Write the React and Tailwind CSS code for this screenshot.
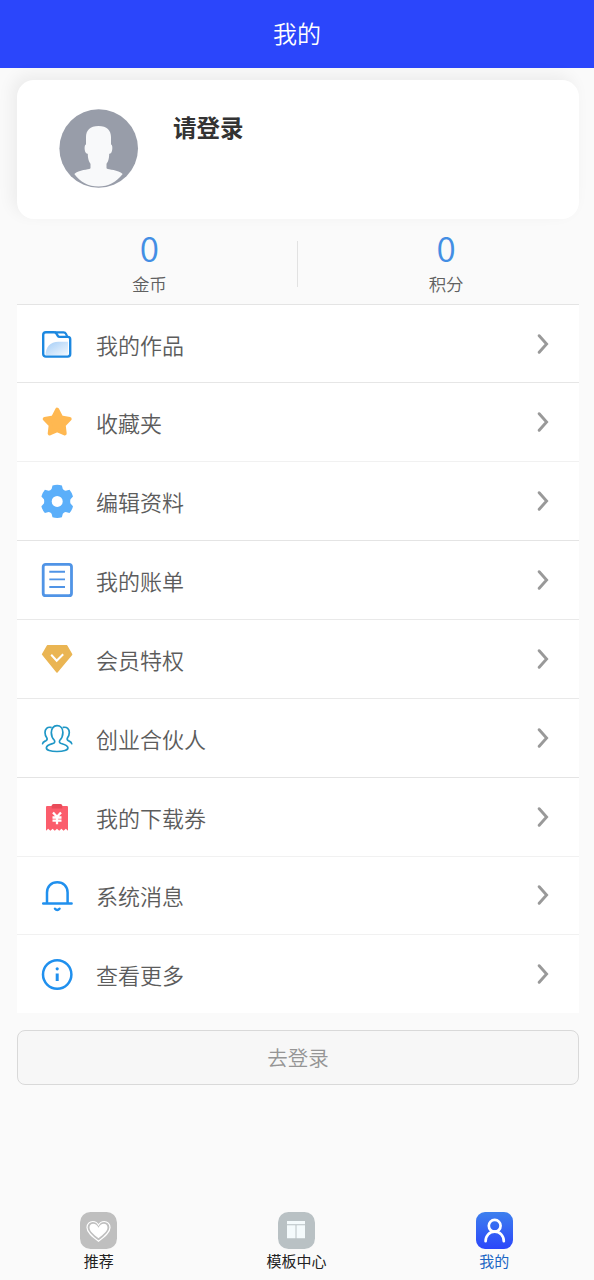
import React, { useState } from "react";

const FolderIcon = () => (
  <svg className="w-9 h-9" viewBox="0 0 36 36" fill="none">
    <defs>
      <linearGradient id="folderFill" x1="0" y1="0" x2="1" y2="1">
        <stop offset="0" stopColor="#a3cdf7" />
        <stop offset="1" stopColor="#f2f8fe" />
      </linearGradient>
    </defs>
    <path d="M6.500 29.500c0-8 4.500-13.700 13-13.700h9.500v13.700z" fill="url(#folderFill)" />
    <path d="M7 6.200h8.200c1 0 1.600.4 2.100 1.200l1.500 2.500c.4.700 1 1 1.800 1h8.300c1.400 0 2.300 1 2.300 2.300v14.800c0 1.600-1 2.600-2.600 2.600H6.900c-1.600 0-2.700-1-2.700-2.600V8.800c0-1.600 1.100-2.600 2.800-2.600z" stroke="#1c88e0" strokeWidth="2.400" />
    <path d="M16 6.300h8.500c1.300 0 2 .5 2.500 1.600l1.300 3" stroke="#1c88e0" strokeWidth="2.200" />
  </svg>
);

const StarIcon = () => (
  <svg className="w-9 h-9" viewBox="0 0 36 36">
    <path d="M18.200 5.700l4 7.800 8.500 1.400-6 6.200 1 8.400-7.500-3.300-7.500 3.300 1-8.400-6-6.200 8.500-1.400z" fill="#ffb851" stroke="#ffb851" strokeWidth="4" strokeLinejoin="round" />
  </svg>
);

const GearIcon = () => (
  <svg className="w-9 h-9" viewBox="0 0 36 36">
    <path
      d="M13.500 2.500q4.700-1.300 9.400 0l.9 3.600q1.200 1.500 2.900 1.600l3.800-1q2.700 3.200 3.500 6.900l-2.500 2.700q-.6 2.100 0 4.200l2.500 2.700q-.8 3.700-3.500 6.900l-3.800-1q-1.700.1-2.900 1.600l-.9 3.600q-4.700 1.300-9.400 0l-.9-3.600q-1.200-1.500-2.900-1.600l-3.800 1q-2.700-3.200-3.500-6.900l2.500-2.700q.6-2.100 0-4.200l-2.500-2.700q.8-3.700 3.500-6.900l3.800 1q1.700-.1 2.900-1.600z"
      fill="#5baffa"
    />
    <circle cx="18.200" cy="18.400" r="5.500" fill="#fff" />
  </svg>
);

const BillIcon = () => (
  <svg className="w-9 h-9" viewBox="0 0 36 36" fill="none" stroke="#5094e6">
    <rect x="4.200" y="2.300" width="28.300" height="31.400" rx="2.500" strokeWidth="2.800" />
    <path d="M10.300 9.800H26M10.300 17.400H26M10.300 25H26" strokeWidth="1.900" />
  </svg>
);

const VipIcon = () => (
  <svg className="w-9 h-9" viewBox="0 0 36 36">
    <path d="M8.500 4.800h19.200l4.900 8.600L18 31 3.600 13.400z" fill="#eab553" stroke="#eab553" strokeWidth="1.500" strokeLinejoin="round" />
    <path d="M12.200 13.800l5.500 6 6.500-6.500" fill="none" stroke="#fff" strokeWidth="2" />
  </svg>
);

const PartnerIcon = () => (
  <svg className="w-9 h-9" viewBox="0 0 36 36" fill="none" stroke="#1f97c6" strokeWidth="1.700" strokeLinecap="round" strokeLinejoin="round">
    <path d="M15.500 20.500c-2.300-2.300-3.200-5-3.200-8C12.300 8.500 14.500 5.700 18 5.700s5.900 2.800 5.900 6.800c0 3-.9 5.700-3.200 8-.7 1.500 0 2.500 1.600 3 3.500 1 6.300 1.600 6.600 4.200.2 2.500-4.500 3.800-10.900 3.800S7.200 30.200 7.400 27.700c.3-2.600 2.900-3.200 6.500-4.200 1.600-.5 2.200-1.500 1.600-3z" />
    <path d="M12 7.400c-3.700-.8-6 1.500-6 5.200 0 2.200.6 3.800 1.900 5.500.6 1.300.1 2-1 2.600-1.800.9-3.200 1.200-3.300 3" />
    <path d="M24.300 7.400c3.700-.8 6 1.500 6 5.200 0 2.200-.6 3.800-1.900 5.500-.6 1.300-.1 2 1 2.600 1.800.9 3.200 1.200 3.300 3" />
  </svg>
);

const CouponIcon = () => (
  <svg className="w-9 h-9" viewBox="0 0 36 36">
    <path d="M8.200 7h19.600c.7 0 1.200.5 1.200 1.200v23.600l-2.200-2-2.200 2-2.200-2-2.200 2-2.200-2-2.200 2-2.200-2-2.200 2-2.200-2-2.200 2V8.200c0-.7.500-1.200 1.200-1.200z" fill="#fb5d6c" />
    <path d="M14.500 5h7c1 0 1.800.8 1.800 1.800v2.700H12.700V6.800c0-1 .8-1.800 1.800-1.800z" fill="#e94b59" />
    <path d="M14 13.500l4 4.300 4-4.300M13.500 18.500h9M13.500 21.700h9M18 18v7.300" fill="none" stroke="#fff" strokeWidth="2.300" />
  </svg>
);

const BellIcon = () => (
  <svg className="w-9 h-9" viewBox="0 0 36 36" fill="none" stroke="#2090ee" strokeWidth="2.500" strokeLinecap="round">
    <path d="M4.200 26.500h28.400M8 26V15.500C8 9.400 12.200 5.200 18.300 5.200S28.600 9.400 28.600 15.500V26" />
    <path d="M16 31.800c1.300 1.500 3.200 1.500 4.500 0" />
  </svg>
);

const InfoIcon = () => (
  <svg className="w-9 h-9" viewBox="0 0 36 36" fill="none" stroke="#2090ee">
    <circle cx="18.200" cy="18.500" r="14.200" strokeWidth="2.500" />
    <path d="M18.200 17.500v7.500" strokeWidth="3" />
    <circle cx="18.200" cy="12.800" r="1.600" fill="#2090ee" stroke="none" />
  </svg>
);

const menuItems = [
  { title: "我的作品", Icon: FolderIcon, line: "border-[#e4e4e4]" },
  { title: "收藏夹", Icon: StarIcon, line: "border-[#e6e6e6]" },
  { title: "编辑资料", Icon: GearIcon, line: "border-[#f1f1f1]" },
  { title: "我的账单", Icon: BillIcon, line: "border-[#e4e4e4]" },
  { title: "会员特权", Icon: VipIcon, line: "border-[#e9e9e9]" },
  { title: "创业合伙人", Icon: PartnerIcon, line: "border-[#e9e9e9]" },
  { title: "我的下载券", Icon: CouponIcon, line: "border-[#e4e4e4]" },
  { title: "系统消息", Icon: BellIcon, line: "border-[#f1f1f1]" },
  { title: "查看更多", Icon: InfoIcon, line: "border-[#f1f1f1]" },
];

const MenuRow = ({ title, Icon, line }) => (
  <li className={`flex flex-1 items-center border-t pl-[22px] pr-[30px] ${line}`}>
    <Icon />
    <span className="ml-[21px] text-[22px] font-[350] leading-8 text-[#5c5c5c]">{title}</span>
    <svg className="ml-auto w-3 h-5" viewBox="0 0 12 20" fill="none">
      <path d="M2.200 1.700L9.600 10 2.200 18.300" stroke="#999" strokeWidth="2.900" strokeLinecap="round" />
    </svg>
  </li>
);

const Stat = ({ value, label }) => (
  <div className="flex flex-1 flex-col items-center font-[350]">
    <span className="text-[35px] leading-10 text-[#438ee4]">{value}</span>
    <span className="mt-[5px] text-[17.5px] leading-6 text-[#606060]">{label}</span>
  </div>
);

const HeartTab = () => (
  <svg className="w-[37px] h-[37px]" viewBox="0 0 37 37">
    <rect width="37" height="37" rx="10.500" fill="#bfbfbf" />
    <path d="M18.500 29.200C12 24.500 7 20.500 7 15.500c0-3.500 2.600-6 5.800-6 2.500 0 4.500 1.300 5.700 3.500 1.200-2.200 3.200-3.500 5.700-3.500 3.200 0 5.800 2.500 5.800 6 0 5-5 9-11.500 13.700z" fill="none" stroke="#fff" strokeWidth="1.200" />
    <path d="M18.500 26.200c-5-3.700-9-6.900-9-10.600 0-2.300 1.500-3.900 3.600-3.900 2.400 0 4.200 1.600 5.400 4 1.200-2.400 3-4 5.400-4 2.100 0 3.600 1.600 3.600 3.900 0 3.700-4 6.900-9 10.600z" fill="#fff" />
  </svg>
);

const TemplateTab = () => (
  <svg className="w-[37px] h-[37px]" viewBox="0 0 37 37">
    <rect width="37" height="37" rx="10.500" fill="#b9c1c4" />
    <path d="M9 9h18v3.300H9zM9 13.200h8.500v13H9zM18.500 13.200H27v13h-8.500z" fill="#f4fafc" />
  </svg>
);

const MineTab = () => (
  <svg className="w-[37px] h-[37px]" viewBox="0 0 37 37">
    <defs>
      <linearGradient id="mineFill" x1="0" y1="0" x2="0" y2="1">
        <stop offset="0" stopColor="#3d80ee" />
        <stop offset="1" stopColor="#2b46fa" />
      </linearGradient>
    </defs>
    <rect width="37" height="37" rx="9" fill="url(#mineFill)" />
    <g fill="none" stroke="#fff" strokeWidth="2.700" strokeLinecap="round">
      <circle cx="18.700" cy="13.800" r="5.900" />
      <path d="M9.600 29.200c0-5.500 3.900-9.500 9.100-9.500s9.100 4 9.100 9.500" />
    </g>
  </svg>
);

const tabs = [
  { key: "recommend", label: "推荐", Icon: HeartTab },
  { key: "template", label: "模板中心", Icon: TemplateTab },
  { key: "mine", label: "我的", Icon: MineTab },
];

const Avatar = () => (
  <svg className="w-20 h-20" viewBox="0 0 80 80">
    <circle cx="39.700" cy="39.500" r="39.300" fill="#989da9" />
    <path
      d="M39.500 17C48 17 52 21.500 52 28v7.500c1.800.3 1.700 5.500.4 8-.5 1-1.500 1.200-2.200 1.200 0 3-.4 5.300-1.200 7.500-.7 1.500-1.500 2-1.500 3v4c2.200 2 11.500 1 16.200 5.800C57.500 73 49.500 77.500 39.500 77.500S21 73 15.300 65c4.700-4.800 14-3.800 16.200-5.800v-4c0-1-.8-1.500-1.500-3-.8-2.200-1.200-4.500-1.200-7.500-.7 0-1.700-.2-2.200-1.200-1.300-2.500-1.400-7.700.4-8V28c0-6.500 4-11 12.500-11z"
      fill="#f8f9fa"
    />
  </svg>
);

const App = () => {
  const [active, setActive] = useState("mine");

  return (
    <div className="flex h-[1280px] w-full flex-col bg-[#fafafa] font-['Noto_Sans_CJK_SC',sans-serif]">
      {/* HEADER */}
      <header className="flex h-[68px] shrink-0 items-center justify-center bg-[#2b46fb] pb-0.5 text-2xl font-[350] text-white">
        我的
      </header>

      {/* PROFILE */}
      <div className="ml-[17px] mr-[15px] mt-3 flex h-[139px] shrink-0 rounded-[17px] bg-white pl-[42px] pt-[29px] shadow-[-5px_-5px_16px_rgba(0,0,0,0.06)]">
        <Avatar />
        <p className="ml-[34px] text-[23.5px] font-bold text-[#333] leading-9">请登录</p>
      </div>

      {/* STATS */}
      <div className="flex h-[84.6px] shrink-0 pl-[1.500px] pt-2">
        <Stat value="0" label="金币" />
        <div className="mt-[14px] h-[46px] w-px bg-[#e2e2e2]" />
        <Stat value="0" label="积分" />
      </div>

      {/* MENU */}
      <ul className="ml-[17px] mr-[15px] flex h-[709.6px] shrink-0 flex-col bg-white">
        {menuItems.map((item) => (
          <MenuRow key={item.title} {...item} />
        ))}
      </ul>

      <button className="ml-[17px] mr-[15px] mt-[16.8px] h-[55px] shrink-0 rounded-lg border border-[#d9d9d9] bg-[#f7f7f7] text-[20.5px] font-[350] text-[#959595]">
        去登录
      </button>

      {/* TAB BAR */}
      <nav className="mt-auto flex h-[68px] shrink-0 pr-px">
        {tabs.map(({ key, label, Icon }) => (
          <button key={key} className="flex flex-1 flex-col items-center" onClick={() => setActive(key)}>
            <Icon />
            <span className={`text-[15px] leading-6 ${active === key ? "text-[#1c66c4]" : "text-[#222]"}`}>
              {label}
            </span>
          </button>
        ))}
      </nav>
    </div>
  );
};

export default App;
